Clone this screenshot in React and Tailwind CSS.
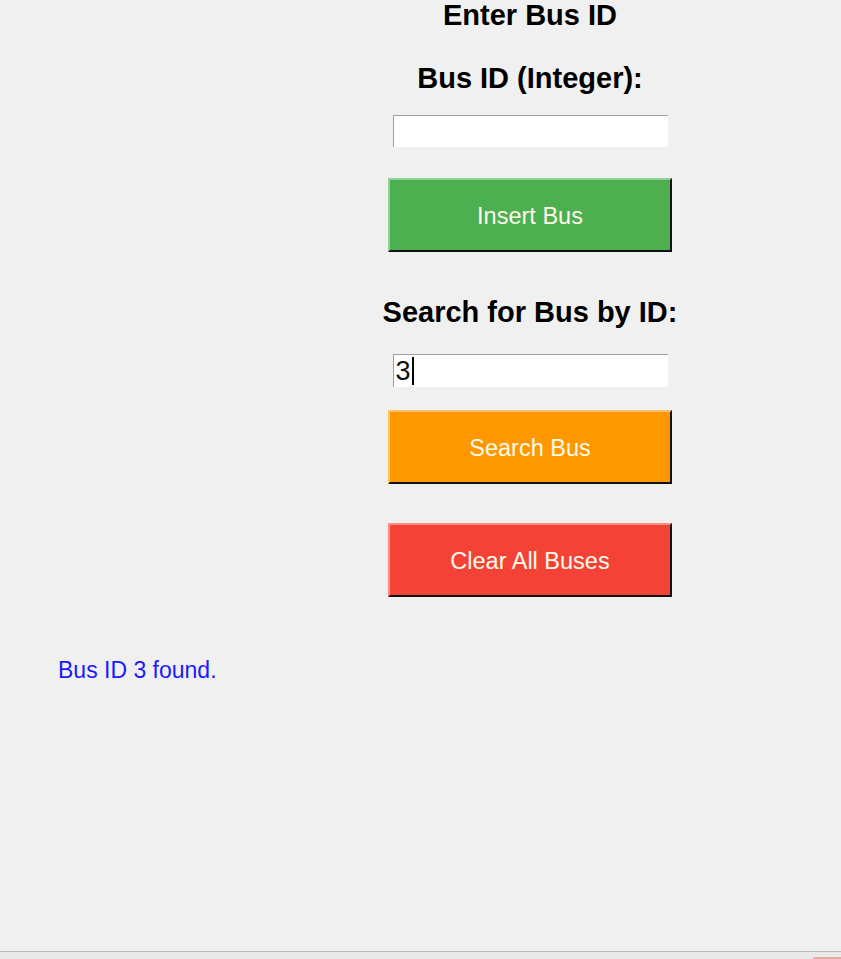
import React from 'react';

const font = { fontFamily: '"Liberation Sans", Arial, sans-serif' };

const ActionButton = ({ label, color }) => (
  <button
    className={`w-[284px] h-[74px] ${color} pt-[3px] text-[23.5px] text-[#fffbea] border-t-2 border-l-2 border-t-white/40 border-l-white/40 border-b-2 border-r-2 border-b-[#111] border-r-[#111] flex items-center justify-center`}
  >
    {label}
  </button>
);

const Entry = ({ children, tall }) => (
  <div className={`w-[275px] ${tall ? 'h-[33px]' : 'h-[32px]'} bg-white border-t border-l border-t-[#a0a0a0] border-l-[#a0a0a0] flex items-center pl-[2px] text-[27px] leading-none text-[#111]`}>
    {children}
  </div>
);

export default function App() {
  return (
    <div className="w-[841px] h-[959px] bg-[#f0f0f0] flex flex-col" style={font}>
      {/* form column, centred at x=530 */}
      <div className="pl-[219px] flex flex-col items-center">
        <h1 className="h-[30px] leading-[30px] text-[29px] font-bold text-black">Enter Bus ID</h1>

        <h2 className="mt-[33px] h-[30px] leading-[30px] text-[29px] font-bold text-black">Bus ID (Integer):</h2>
        <div className="mt-[22px]">
          <Entry />
        </div>

        <div className="mt-[31px]">
          <ActionButton label="Insert Bus" color="bg-[#4caf50]" />
        </div>

        <h2 className="mt-[45px] h-[30px] leading-[30px] text-[29px] font-bold text-black">Search for Bus by ID:</h2>
        <div className="mt-[27px]">
          <Entry tall>
            <span>3</span>
            <span className="w-[2px] h-[28px] bg-black ml-[1px]" />
          </Entry>
        </div>

        <div className="mt-[23px]">
          <ActionButton label="Search Bus" color="bg-[#ff9800]" />
        </div>

        <div className="mt-[39px]">
          <ActionButton label="Clear All Buses" color="bg-[#f44336]" />
        </div>
      </div>

      {/* status message */}
      <p className="mt-[60px] pl-[58px] text-[23px] leading-[26px] text-[#1a1aff]">Bus ID 3 found.</p>

      <div className="mt-auto h-[8px] border-t border-t-[#bcbcbc] bg-[#e9e9e9] flex items-end justify-end">
        <div className="w-[28px] h-[2px] rounded-tl-md bg-[#e8aaa2]" />
      </div>
    </div>
  );
}
